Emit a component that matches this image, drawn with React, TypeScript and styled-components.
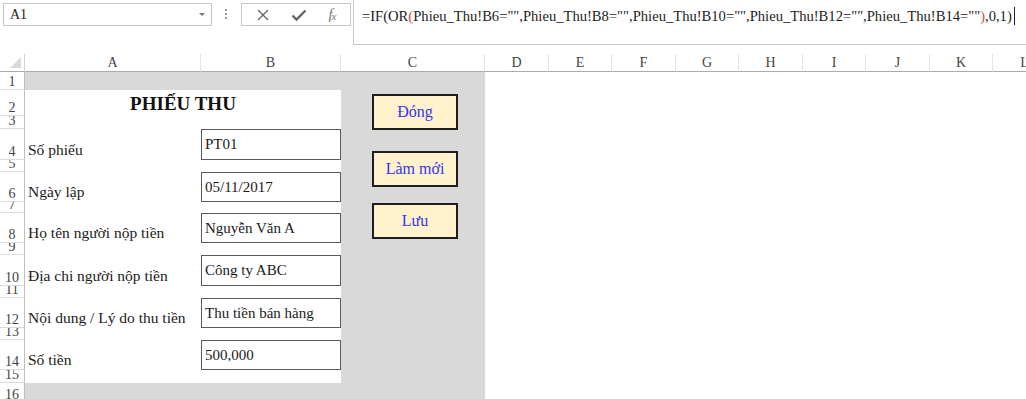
import styled, { createGlobalStyle } from 'styled-components';

const GlobalStyle = createGlobalStyle`
  html, body {
    margin: 0;
    padding: 0;
    background: #ffffff;
    overflow: hidden;
  }
  body {
    font-family: "Liberation Serif", "Times New Roman", serif;
    color: #1a1a1a;
  }
`;

const COLUMNS = [
  { key: 'A', width: 176 },
  { key: 'B', width: 140 },
  { key: 'C', width: 144 },
  { key: 'D', width: 64 },
  { key: 'E', width: 63 },
  { key: 'F', width: 64 },
  { key: 'G', width: 63 },
  { key: 'H', width: 64 },
  { key: 'I', width: 63 },
  { key: 'J', width: 64 },
  { key: 'K', width: 63 },
  { key: 'L', width: 64 },
];

const ROW_HEIGHTS = [18, 26, 13, 31, 12, 30, 11, 30, 12, 31, 12, 30, 12, 30, 13, 20];

const FIELDS: Record<number, { label: string; value: string }> = {
  4: { label: 'Số phiếu', value: 'PT01' },
  6: { label: 'Ngày lập', value: '05/11/2017' },
  8: { label: 'Họ tên người nộp tiền', value: 'Nguyễn Văn A' },
  10: { label: 'Địa chi người nộp tiền', value: 'Công ty ABC' },
  12: { label: 'Nội dung / Lý do thu tiền', value: 'Thu tiền bán hàng' },
  14: { label: 'Số tiền', value: '500,000' },
};

// macro buttons float over column C, offsets from the sheet's top edge
const BUTTONS = [
  { label: 'Đóng', top: 40 },
  { label: 'Làm mới', top: 97 },
  { label: 'Lưu', top: 149 },
];

const Page = styled.div`
  width: 1026px;
  height: 399px;
  overflow: hidden;
  background: #ffffff;
`;

/* ---------- formula bar ---------- */

const TopBar = styled.div`
  display: flex;
  align-items: flex-start;
  height: 54px;
  padding-left: 3px;
`;

const NameBox = styled.div`
  display: flex;
  align-items: center;
  justify-content: space-between;
  flex-shrink: 0;
  box-sizing: border-box;
  width: 209px;
  height: 23px;
  margin-top: 3px;
  padding: 0 6px 0 6px;
  border: 1px solid #c6c6c6;
  font-size: 14px;
  color: #222;
`;

const DropArrow = styled.span`
  width: 0;
  height: 0;
  border-left: 3px solid transparent;
  border-right: 3px solid transparent;
  border-top: 3px solid #777;
`;

const Grip = styled.div`
  display: flex;
  flex-direction: column;
  flex-shrink: 0;
  gap: 2px;
  margin: 9px 14px 0 13px;

  span {
    width: 2px;
    height: 2px;
    background: #9a9a9a;
  }
`;

const ActionBox = styled.div`
  display: flex;
  align-items: center;
  justify-content: space-around;
  flex-shrink: 0;
  box-sizing: border-box;
  width: 110px;
  height: 23px;
  margin-top: 3px;
  padding: 0 4px;
  border: 1px solid #c6c6c6;
  color: #666;
`;

const FxLabel = styled.span`
  font-style: italic;
  font-size: 15px;
  color: #777;
  letter-spacing: -1px;

  sub {
    font-size: 11px;
    vertical-align: -1px;
  }
`;

const FormulaBox = styled.div`
  box-sizing: border-box;
  flex: 1;
  min-width: 0;
  height: 45px;
  margin-left: 2px;
  padding: 7px 0 0 8px;
  border: 1px solid #c6c6c6;
  border-top: none;
  border-right: none;
  font-size: 14.6px;
  color: #222;
  white-space: nowrap;
  overflow: hidden;
`;

const Paren = styled.span`
  color: #e0463c;
`;

const Caret = styled.span`
  display: inline-block;
  width: 1px;
  height: 18px;
  margin-left: 2px;
  vertical-align: -4px;
  background: #222;
`;

/* ---------- sheet ---------- */

const SheetWrap = styled.div`
  position: relative;
`;

const Sheet = styled.div`
  display: grid;
  grid-template-columns: 25px ${COLUMNS.map(c => `${c.width}px`).join(' ')};
  grid-template-rows: 18px ${ROW_HEIGHTS.map(h => `${h}px`).join(' ')};
`;

const Corner = styled.div`
  position: relative;
  border-right: 1px solid #d4d4d4;
  border-bottom: 1px solid #ababab;

  &::after {
    content: '';
    position: absolute;
    right: 3px;
    bottom: 3px;
    border-left: 11px solid transparent;
    border-bottom: 11px solid #d9d9d9;
  }
`;

const ColHeader = styled.div`
  display: flex;
  align-items: center;
  justify-content: center;
  border-right: 1px solid #e3e3e3;
  border-bottom: 1px solid #ababab;
  font-size: 14px;
  color: #444;
`;

const RowHeader = styled.div`
  display: flex;
  align-items: flex-end;
  justify-content: center;
  box-sizing: border-box;
  border-right: 1px solid #bfbfbf;
  border-bottom: 1px solid #dadada;
  font-size: 14px;
  line-height: 14px;
  color: #444;
  overflow: hidden;
`;

const Cell = styled.div<{ $fill: string }>`
  display: flex;
  align-items: flex-end;
  min-width: 0;
  background: ${({ $fill }) => $fill};
  font-size: 15px;
  white-space: nowrap;
`;

const Title = styled.div`
  grid-column: span 2;
  display: flex;
  align-items: flex-end;
  justify-content: center;
  padding-bottom: 2px;
  background: #ffffff;
  font-size: 19px;
  line-height: 20px;
  font-weight: bold;
  color: #111;
`;

const Label = styled(Cell)`
  padding: 0 0 1px 3px;
  font-size: 15.5px;
`;

const ValueBox = styled(Cell)`
  box-sizing: border-box;
  align-items: center;
  padding: 0 0 0 3px;
  border: 1.5px solid #5a5a5a;
  border-right-width: 1px;
`;

const ShapeLayer = styled.div`
  position: absolute;
  left: 372px;
  top: 0;
`;

const MacroButton = styled.div<{ $top: number }>`
  position: absolute;
  left: 0;
  top: ${({ $top }) => $top}px;
  box-sizing: border-box;
  display: flex;
  align-items: center;
  justify-content: center;
  width: 86px;
  height: 36px;
  border: 2px solid #1e1e1e;
  background: #fff2cc;
  color: #3535f0;
  font-size: 16px;
  white-space: nowrap;
`;

const GRAY = '#d9d9d9';
const WHITE = '#ffffff';

const cellFill = (row: number, col: number) => {
  if (col > 2) return WHITE;
  if (col < 2 && row >= 2 && row <= 15) return WHITE;
  return GRAY;
};

const renderRow = (row: number) => {
  const cells = [<RowHeader key={`rh-${row}`}>{row}</RowHeader>];
  const field = FIELDS[row];

  COLUMNS.forEach((col, i) => {
    const key = `${col.key}${row}`;
    if (row === 2 && i === 0) {
      cells.push(<Title key={key}>PHIẾU THU</Title>);
      return;
    }
    if (row === 2 && i === 1) return;
    if (field && i === 0) {
      cells.push(
        <Label key={key} $fill={WHITE}>
          {field.label}
        </Label>,
      );
      return;
    }
    if (field && i === 1) {
      cells.push(
        <ValueBox key={key} $fill={WHITE}>
          {field.value}
        </ValueBox>,
      );
      return;
    }
    cells.push(<Cell key={key} $fill={cellFill(row, i)} />);
  });

  return cells;
};

export default function App() {
  return (
    <Page>
      <GlobalStyle />
      <TopBar>
        <NameBox>
          <span>A1</span>
          <DropArrow />
        </NameBox>
        <Grip>
          <span />
          <span />
          <span />
        </Grip>
        <ActionBox>
          <svg width="14" height="14" viewBox="0 0 14 14">
            <path d="M2 2 L12 12 M12 2 L2 12" stroke="#666" strokeWidth="1.4" fill="none" />
          </svg>
          <svg width="16" height="14" viewBox="0 0 16 14">
            <path d="M1.5 7.5 L5.5 11.5 L14.5 2.5" stroke="#666" strokeWidth="2.4" fill="none" />
          </svg>
          <FxLabel>
            f<sub>x</sub>
          </FxLabel>
        </ActionBox>
        <FormulaBox>
          =IF(OR<Paren>(</Paren>Phieu_Thu!B6="",Phieu_Thu!B8="",Phieu_Thu!B10="",Phieu_Thu!B12="",Phieu_Thu!B14=""
          <Paren>)</Paren>,0,1)
          <Caret />
        </FormulaBox>
      </TopBar>
      <SheetWrap>
        <Sheet>
          <Corner />
          {COLUMNS.map(col => (
            <ColHeader key={col.key}>{col.key}</ColHeader>
          ))}
          {ROW_HEIGHTS.map((_, i) => renderRow(i + 1))}
        </Sheet>
        <ShapeLayer>
          {BUTTONS.map(btn => (
            <MacroButton key={btn.label} $top={btn.top}>
              {btn.label}
            </MacroButton>
          ))}
        </ShapeLayer>
      </SheetWrap>
    </Page>
  );
}
